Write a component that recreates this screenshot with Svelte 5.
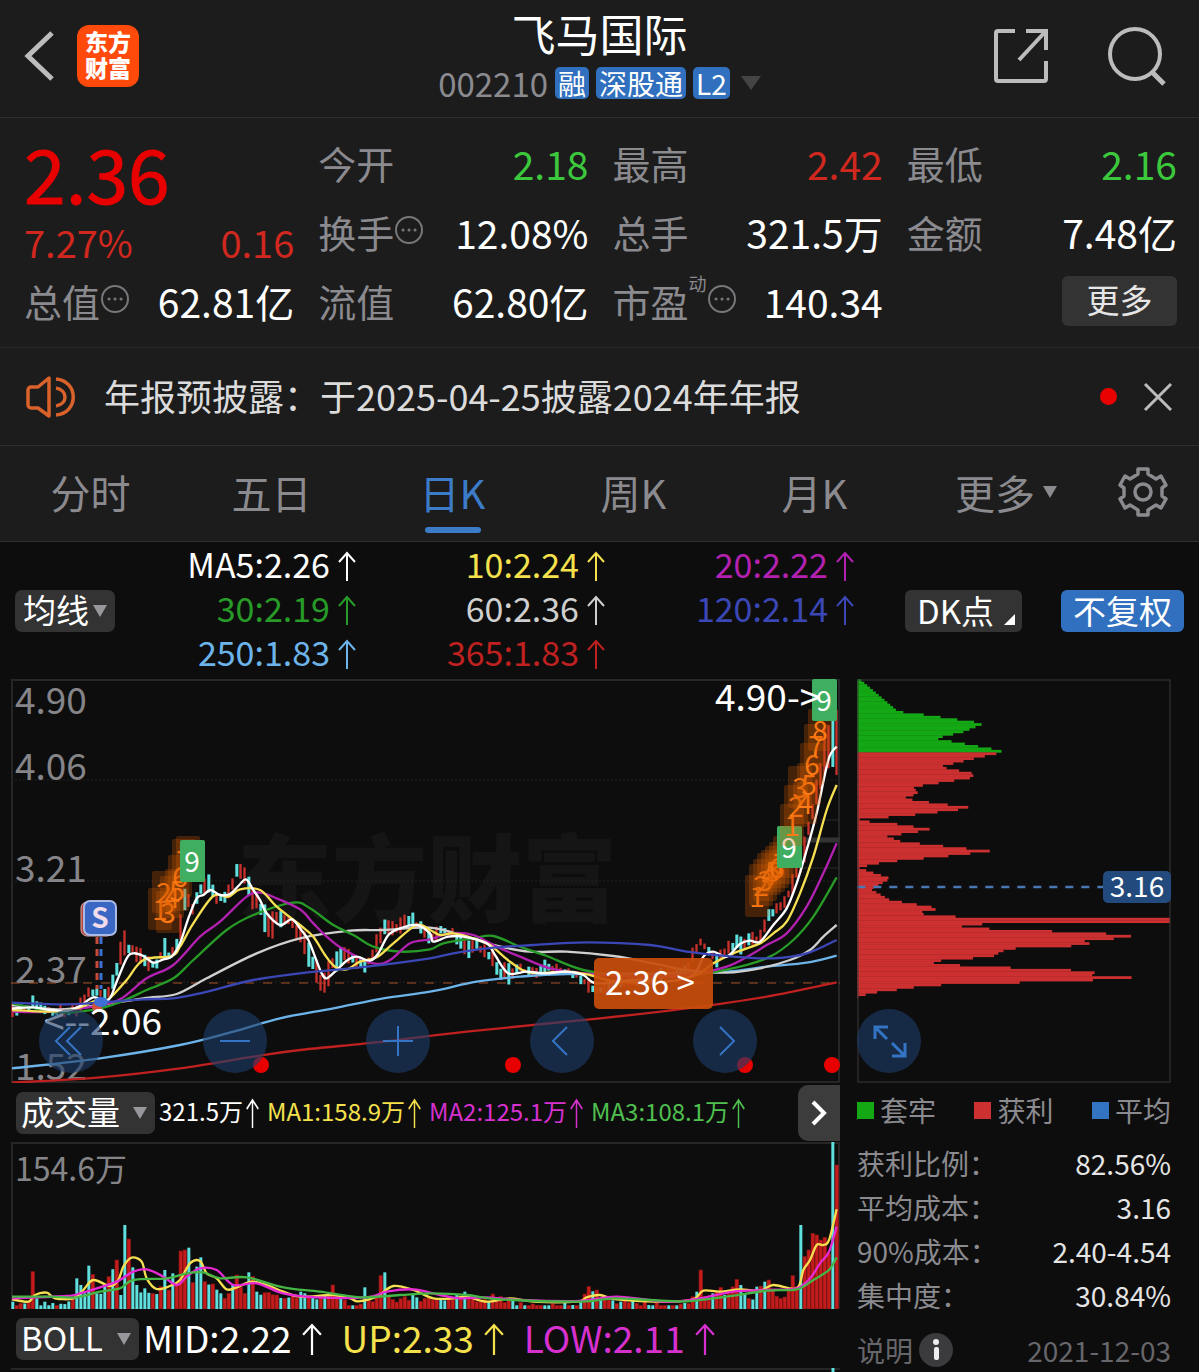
<script>
  const tags = ["融", "深股通", "L2"];
  const tabs = ["分时", "五日", "日K", "周K", "月K"];
  let activeTab = "日K";

  const quotes = [
    { label: "今开", value: "2.18", tone: "down" },
    { label: "最高", value: "2.42", tone: "up" },
    { label: "最低", value: "2.16", tone: "down" },
    { label: "换手", value: "12.08%", hint: true },
    { label: "总手", value: "321.5万" },
    { label: "金额", value: "7.48亿" },
    { label: "总值", value: "62.81亿", hint: true },
    { label: "流值", value: "62.80亿" },
    { label: "市盈", sup: "动", value: "140.34", hint: true },
  ];

  const averages = [
    { text: "MA5:2.26", color: "#ffffff" },
    { text: "10:2.24", color: "#f5e14c" },
    { text: "20:2.22", color: "#b321b0" },
    { text: "30:2.19", color: "#279a27" },
    { text: "60:2.36", color: "#cfcfcf" },
    { text: "120:2.14", color: "#3b47b5" },
    { text: "250:1.83", color: "#6cb4ea" },
    { text: "365:1.83", color: "#bf2020" },
  ];

  const volumes = [
    { text: "321.5万", color: "#ffffff" },
    { text: "MA1:158.9万", color: "#f5e14c" },
    { text: "MA2:125.1万", color: "#d631cf" },
    { text: "MA3:108.1万", color: "#4fc04f" },
  ];

  const bolls = [
    { text: "MID:2.22", color: "#ffffff" },
    { text: "UP:2.33", color: "#f5e14c" },
    { text: "LOW:2.11", color: "#d631cf" },
  ];

  const legend = [
    { text: "套牢", color: "#15a815" },
    { text: "获利", color: "#cc3030" },
    { text: "平均", color: "#3274c2" },
  ];

  const stats = [
    { label: "获利比例：", value: "82.56%" },
    { label: "平均成本：", value: "3.16" },
    { label: "90%成本：", value: "2.40-4.54" },
    { label: "集中度：", value: "30.84%" },
  ];

  const axis = [
    { text: "4.90", y: 35 },
    { text: "4.06", y: 101 },
    { text: "3.21", y: 203 },
    { text: "2.37", y: 304 },
    { text: "1.52", y: 401 },
  ];

  // Price chart series, three units to the pixel
  const priceLines = [
    { color: "#bf2020", d: [36,1238,300,1222,540,1195,760,1160,900,1140,1150,1115,1400,1085,1800,1045,2060,1015,2300,980,2510,937] },
    { color: "#6cb4ea", d: [36,1195,300,1165,540,1125,700,1085,840,1045,1000,1015,1150,985,1290,965,1430,935,1560,920,1700,912,2000,910,2180,905,2300,890,2420,878,2510,857] },
    { color: "#cfcfcf", d: [36,1005,180,1018,300,1005,430,985,530,972,620,925,770,850,900,805,1050,782,1150,780,1290,773,1400,800,1480,825,1590,845,1700,845,1840,858,1960,880,2060,900,2180,908,2280,895,2370,870,2430,840,2470,800,2510,765] },
    { color: "#279a27", d: [36,1000,130,1020,200,1028,300,1015,370,992,440,960,520,925,580,870,680,780,760,735,880,698,930,715,1000,765,1060,795,1120,830,1200,845,1290,838,1330,820,1420,805,1480,798,1560,830,1640,858,1750,900,1900,920,2080,915,2220,890,2310,860,2380,810,2440,740,2510,622] },
    { color: "#b321b0", d: [36,1025,150,1025,280,1010,360,988,440,925,520,885,600,800,660,755,740,680,780,668,830,685,900,718,940,760,980,800,1030,838,1120,880,1170,870,1230,820,1290,808,1350,790,1420,795,1490,830,1560,860,1650,895,1750,910,1900,920,2060,915,2180,890,2260,850,2300,825,2360,790,2420,710,2470,610,2510,520] },
    { color: "#f7df52", d: [36,1020,150,1025,230,1015,290,990,325,988,380,930,430,870,515,858,540,830,580,760,640,678,685,680,720,658,780,660,830,710,900,765,940,800,975,855,1005,890,1040,898,1080,875,1130,862,1180,820,1250,765,1290,780,1320,795,1360,790,1420,805,1470,825,1530,875,1590,908,1700,905,1770,915,1850,935,2000,935,2090,915,2140,880,2200,850,2280,820,2320,790,2360,755,2400,670,2440,560,2480,420,2510,345] },
    { color: "#ffffff", d: [36,1015,100,1012,150,1020,200,1022,240,1008,280,982,325,990,350,935,380,865,400,850,430,858,460,878,490,868,515,860,540,820,565,745,590,685,610,675,632,660,660,675,690,672,715,648,738,628,760,660,780,690,800,730,840,765,875,748,900,775,925,810,945,860,965,910,980,925,1005,905,1040,872,1070,860,1110,872,1135,850,1165,795,1200,775,1250,765,1290,790,1300,815,1345,800,1390,800,1460,820,1485,855,1525,910,1580,905,1635,910,1700,905,1750,915,1790,940,1900,930,2000,935,2080,915,2110,860,2140,845,2180,860,2220,822,2250,812,2280,815,2320,765,2360,715,2390,640,2420,540,2450,430,2485,270,2510,230] },
    { color: "#3b47b5", d: [36,998,200,1003,330,995,430,988,520,985,600,970,760,930,900,910,1100,890,1290,865,1360,850,1480,833,1600,825,1760,817,1950,825,2060,845,2200,860,2320,865,2420,850,2510,810] },
  ];

  // x, high, low
  const range = [
    [40,1005,1040],[86,1005,1030],[98,970,1020],[112,990,1020],[130,1005,1040],[200,1005,1045],[235,985,1035],[270,945,990],[325,955,990],[350,870,930],[373,780,875],[386,820,860],[400,795,870],[430,845,905],[460,870,905],[480,830,890],[493,790,870],[510,850,880],[535,760,850],[555,650,740],[565,655,715],[580,690,745],[600,640,670],[627,615,680],[650,670,705],[680,655,700],[710,573,640],[735,590,640],[760,660,730],[780,680,735],[808,740,830],[830,715,770],[870,740,770],[905,770,845],[940,850,925],[963,900,970],[975,910,995],[1000,840,910],[1035,830,870],[1060,850,890],[1095,860,920],[1120,820,870],[1155,730,790],[1200,745,800],[1237,725,770],[1265,760,800],[1290,780,830],[1320,760,800],[1360,775,800],[1393,800,875],[1430,805,850],[1475,830,885],[1495,870,930],[1525,885,940],[1560,880,910],[1590,890,930],[1635,872,910],[1680,885,910],[1720,900,925],[1750,910,945],[1768,930,985],[1790,940,980],[1900,915,950],[2060,880,920],[2100,785,840],[2120,820,850],[2150,850,900],[2170,825,860],[2215,780,850],[2245,795,840],[2275,780,830],[2305,720,770],[2330,700,730],[2355,680,720],[2375,600,690],[2410,520,600],[2440,380,450],[2460,280,380],[2475,150,310],[2498,40,290],[2510,110,390],
  ];

  const volumeTops = [
    [40,665],[60,670],[86,665],[98,575],[112,655],[135,665],[200,660],[218,650],[230,595],[243,615],[255,640],[267,557],[280,583],[295,640],[325,590],[350,540],[362,645],[375,435],[388,477],[400,562],[412,615],[430,625],[455,640],[480,620],[495,570],[507,630],[518,580],[530,610],[542,513],[555,510],[567,503],[578,608],[590,560],[602,532],[615,605],[640,612],[660,640],[685,640],[710,585],[735,640],[747,577],[760,590],[775,635],[800,635],[830,645],[850,655],[905,635],[960,655],[1000,615],[1030,660],[1080,672],[1095,622],[1110,660],[1130,650],[1140,587],[1157,577],[1170,650],[1215,650],[1240,645],[1270,655],[1395,635],[1430,665],[1480,642],[1500,650],[1540,660],[1600,672],[1690,668],[1740,665],[1755,642],[1768,620],[1790,630],[1815,655],[1870,655],[1930,665],[2040,672],[2090,635],[2103,570],[2115,650],[2150,635],[2162,622],[2185,640],[2210,598],[2225,615],[2250,655],[2270,620],[2295,605],[2307,600],[2340,655],[2366,630],[2378,587],[2390,620],[2403,435],[2415,530],[2426,510],[2438,460],[2450,465],[2465,480],[2475,472],[2487,520],[2498,186],[2510,255],
  ];

  const volumeLines = [
    { color: "#f7df52", d: [36,658,85,665,105,645,140,638,165,655,220,655,250,630,280,600,330,618,355,600,370,560,395,533,425,545,440,595,470,627,510,618,540,600,570,550,600,543,620,580,650,595,680,628,710,622,755,605,800,615,850,635,900,650,1000,645,1050,655,1075,664,1130,650,1180,618,1240,630,1300,655,1360,655,1400,650,1460,665,1530,655,1600,665,1730,665,1760,652,1800,645,1850,658,2000,665,2080,658,2110,632,2160,635,2220,628,2280,632,2320,615,2390,625,2410,570,2430,540,2450,495,2470,495,2487,480,2510,388] },
    { color: "#e82ad6", d: [36,655,200,648,240,640,300,622,350,605,400,575,440,568,490,590,530,615,560,590,600,565,650,570,700,615,770,610,850,640,950,652,1100,652,1160,635,1240,628,1320,645,1380,655,1460,652,1560,660,1740,663,1850,650,2000,665,2100,655,2200,635,2300,630,2390,625,2430,595,2460,550,2487,515,2510,440] },
    { color: "#45b545", d: [36,650,150,650,230,652,300,635,360,625,400,600,500,595,560,580,610,577,660,595,740,592,850,622,960,635,1080,652,1200,645,1300,640,1400,645,1500,658,1740,665,1840,655,1950,660,2060,664,2180,650,2300,632,2390,628,2440,600,2487,570,2510,532] },
  ];

  // y, right edge of the cost distribution
  const chips = [
    [28,60],[125,175],[130,225],[160,432],[185,370],[205,285],[242,487],[250,472],[262,415],[290,297],[310,400],[322,400],[350,220],[370,235],[385,188],[400,290],[413,400],[425,300],[437,190],[447,60],[452,54],[462,170],[478,276],[498,140],[515,185],[543,453],[560,300],[575,137],[592,54],[605,90],[625,152],[657,92],[690,150],[715,302],[730,220],[743,390],[747,990],[755,990],[757,465],[772,340],[785,675],[795,888],[803,850],[816,695],[824,802],[832,540],[845,475],[855,475],[866,380],[875,245],[888,385],[900,690],[911,797],[917,735],[924,923],[936,565],[947,210],[954,228],[962,130],[978,55],
  ];

  const marks = [
    [149,230,1],[153,213,2],[157,233,3],[161,218,4],[166,211,5],[169,197,6],[173,181,7],[177,178,8],[181,182,9],
    [746,217,1],[750,206,2],[754,201,3],[758,195,4],[762,192,5],[766,188,6],[770,184,7],[774,178,8],[778,168,9],
    [781,146,1],[785,127,2],[789,108,3],[794,124,4],[798,105,5],[801,85,6],[805,66,7],[809,51,8],[813,21,9],
  ];

  function rand(i) {
    const v = Math.sin(i * 12.9898) * 43758.5453;
    return v - Math.floor(v);
  }

  function at(table, x, col) {
    const i = table.findIndex((row) => row[0] >= x);
    if (i < 0) return table[table.length - 1][col];
    if (i === 0) return table[0][col];
    const a = table[i - 1];
    const b = table[i];
    return a[col] + ((b[col] - a[col]) * (x - a[0])) / (b[0] - a[0]);
  }

  function curve(d) {
    const p = [];
    for (let i = 0; i < d.length; i += 2) p.push([d[i], d[i + 1]]);
    let out = `M${p[0]}`;
    for (let i = 0; i < p.length - 1; i++) {
      const [a, b, c, e] = [p[i - 1] || p[i], p[i], p[i + 1], p[i + 2] || p[i + 1]];
      out += `C${b[0] + (c[0] - a[0]) / 6},${b[1] + (c[1] - a[1]) / 6} ${c[0] - (e[0] - b[0]) / 6},${c[1] - (e[1] - b[1]) / 6} ${c}`;
    }
    return out;
  }

  const candles = [];
  const bars = [];
  for (let i = 0; i < 207; i++) {
    const x = 38 + i * 12;
    const high = at(range, x, 1);
    const low = at(range, x, 2);
    const size = low - high;
    candles.push({
      x,
      high: high + size * (0.5 * rand(i) - 0.1),
      low: low - size * (0.45 * rand(i + 300) - 0.1),
      up: x > 2340 ? i !== 205 : rand(i + 77) > 0.48,
    });
    const near = volumeTops.find((v) => Math.abs(v[0] - x) < 6);
    bars.push({
      x,
      y: near ? near[1] : Math.min(676, at(volumeTops, x, 1) + rand(i + 9) * 18),
      up: near && [375, 400, 495, 567, 602, 747, 2403, 2498].includes(near[0]) ? false : x > 2340 || rand(i + 51) > 0.42,
    });
  }

  const chipRows = [];
  for (let y = 28; y < 978; y += 7.3) chipRows.push({ y, w: at(chips, y + 3.6, 1) - 52 });
</script>

{#snippet hint()}
  <svg class="hint" viewBox="0 0 30 30" aria-hidden="true">
    <circle cx="15" cy="15" r="13" />
    <path d="M9 15h.1M15 15h.1M21 15h.1" />
  </svg>
{/snippet}

{#snippet quote(q)}
  <div class="quote">
    <span class="quote-label">{q.label}{#if q.sup}<sup>{q.sup}</sup>{/if}{#if q.hint}{@render hint()}{/if}</span>
    <span class="quote-value {q.tone}">{q.value}</span>
  </div>
{/snippet}

{#snippet reading(item)}
  <span class="reading" style:color={item.color}>
    {item.text}
    <svg class="arrow" viewBox="0 0 18 30" preserveAspectRatio="none" aria-hidden="true"><path d="M9 30V2M1 11L9 2l8 9" /></svg>
  </span>
{/snippet}

{#snippet picker(name, options)}
  <span class="picker">
    <select aria-label={name}>
      {#each options as option}<option>{option}</option>{/each}
    </select>
    <svg viewBox="0 0 14 12" aria-hidden="true"><path d="M0 0h14L7 12z" /></svg>
  </span>
{/snippet}

<div class="page">
  <header>
    <div class="side">
      <button class="icon" aria-label="返回">
        <svg width="32" height="52" viewBox="0 0 32 52"><path d="M28 3L4 26l24 23" stroke-width="5" /></svg>
      </button>
      <a class="logo" href="#home"><span>东方</span><span>财富</span></a>
    </div>
    <div class="name">
      <h1>飞马国际</h1>
      <div class="code">
        <span>002210</span>
        {#each tags as tag}<b>{tag}</b>{/each}
        <svg width="20" height="14" viewBox="0 0 20 14"><path d="M0 0h20L10 14z" fill="#444" /></svg>
      </div>
    </div>
    <div class="side end">
      <button class="icon" aria-label="分享">
        <svg width="56" height="56" viewBox="0 0 56 56" stroke-width="4">
          <path d="M22 3H5a2 2 0 0 0-2 2v46a2 2 0 0 0 2 2h46a2 2 0 0 0 2-2V33M33 3h20v19M52 4L26 32" />
        </svg>
      </button>
      <button class="icon" aria-label="搜索">
        <svg width="60" height="60" viewBox="0 0 60 60" stroke-width="4">
          <circle cx="28" cy="28" r="25" />
          <path d="M45 46l12 12" stroke-width="5" />
        </svg>
      </button>
    </div>
  </header>

  <section class="quotes">
    <div class="price">
      <strong>2.36</strong>
      <div class="change"><span>7.27%</span><span>0.16</span></div>
    </div>
    {#each quotes as q}{@render quote(q)}{/each}
    <div class="quote last"><button class="more">更多</button></div>
  </section>

  <section class="notice">
    <svg width="50" height="42" viewBox="0 0 50 42" fill="none" stroke="#d9622b" stroke-width="3.5" stroke-linejoin="round">
      <path d="M23 2v38L12 32H5a3 3 0 0 1-3-3V14a3 3 0 0 1 3-3h7zM30 3c23 2 23 34 0 36M30 12c12 2 12 16 0 18" />
    </svg>
    <a href="#notice">年报预披露：于2025-04-25披露2024年年报</a>
    <i class="dot"></i>
    <button class="icon" aria-label="关闭">
      <svg width="30" height="30" viewBox="0 0 30 30" stroke-width="3"><path d="M2 2l26 26M28 2L2 28" /></svg>
    </button>
  </section>

  <nav>
    {#each tabs as tab}
      <button class:active={tab === activeTab} on:click={() => (activeTab = tab)}>{tab}</button>
    {/each}
    <button class="tab-more">更多<svg width="14" height="12" viewBox="0 0 14 12"><path d="M0 0h14L7 12z" fill="#8a8a8f" /></svg></button>
    <button aria-label="设置">
      <svg width="50" height="50" viewBox="0 0 50 50" fill="none" stroke="#8a8a8f" stroke-width="3.5" stroke-linejoin="round">
        <path d="M20 2h10v5l8 5 5-3 5 9-4 3v8l4 3-5 9-5-3-8 5v5H20v-5l-8-5-5 3-5-9 4-3v-8l-4-3 5-9 5 3 8-5z" />
        <circle cx="25" cy="25" r="8" />
      </svg>
    </button>
  </nav>

  <section class="averages">
    {@render picker("均线", ["均线"])}
    <div class="average-list">
      {#each averages as item}{@render reading(item)}{/each}
    </div>
    <div class="average-actions">
      <button class="chip-button">DK点<svg width="11" height="11" viewBox="0 0 11 11"><path d="M11 0v11H0z" fill="#fff" /></svg></button>
      <button class="chip-button blue">不复权</button>
    </div>
  </section>

  <main>
    <div class="left">
      <div class="chart">
        <svg class="plot" viewBox="0 0 829 404">
          <text class="watermark" x="226" y="236">东方财富</text>
          <rect class="frame" x="1" y="1" width="827" height="402" />
          <path class="grid" d="M0 101h829M0 202h829M0 303h829" />
          <path d="M809 141h20M790 189h39" stroke="#2a2a2a" />
          <path d="M792 161h37" stroke="#333" stroke-width="5" />
          {#each axis as tick}<text class="tick" x="4" y={tick.y}>{tick.text}</text>{/each}
          <path class="last-price" d="M0 304h829" />
          <svg x="0" y="0" width="829" height="404" viewBox="33 27 2487 1212">
            {#each candles as c}
              <rect x={c.x - 4} y={c.high} width={c.up ? 7 : 9} height={c.low - c.high} fill={c.up ? "#c8302c" : "#5fe0de"} />
            {/each}
            {#each priceLines as line}<path class="line" d={curve(line.d)} stroke={line.color} />{/each}
          </svg>
          {#each marks as [x, y, n]}
            {#if n === 9}
              <rect x={x - 12} y={y - 21} width="25" height="42" rx="2" fill="#3fae60" />
            {:else}
              <rect x={x - 12} y={y - 21} width="24" height="42" rx="2" fill="#d05a00" fill-opacity=".28" />
            {/if}
            <text class="mark" class:nine={n === 9} {x} y={y + 11}>{n}</text>
          {/each}
          <path d="M86 258v52" stroke="#c44a3c" stroke-width="3" stroke-dasharray="7 5" />
          <path d="M90 258v52" stroke="#3f6fd0" stroke-width="3" stroke-dasharray="7 5" />
          <circle cx="86" cy="328" r="5" fill="#d2513c" />
          <ellipse cx="90" cy="323" rx="7" ry="5" fill="#3d6fd6" />
          <rect x="70" y="223" width="32" height="34" rx="6" fill="#b8433c" stroke="#d9a9a5" />
          <rect x="73" y="222" width="32" height="34" rx="6" fill="#3a66c4" stroke="#a9bbe4" stroke-width="2" />
          <text class="signal" x="89" y="249">S</text>
          <text class="peak" x="704" y="32">4.90-&gt;</text>
          <text class="peak" x="151" y="356" text-anchor="end">&lt;--2.06</text>
          <rect x="583" y="279" width="119" height="51" rx="5" fill="#c84d0c" fill-opacity=".93" />
          <text class="tag" x="594" y="316">2.36 &gt;</text>
          {#each [250, 502, 734, 821] as x}<circle cx={x} cy="386" r="8" fill="#e80000" />{/each}
        </svg>
        <div class="controls">
          <button class="round" aria-label="最早"><svg viewBox="0 0 64 64"><path d="M31 18L17 32l14 14M42 18L28 32l14 14" /></svg></button>
          <button class="round" aria-label="缩小"><svg viewBox="0 0 64 64"><path d="M17 32h30" /></svg></button>
          <button class="round" aria-label="放大"><svg viewBox="0 0 64 64"><path d="M17 32h30M32 17v30" /></svg></button>
          <button class="round" aria-label="左移"><svg viewBox="0 0 64 64"><path d="M37 18L23 32l14 14" /></svg></button>
          <button class="round" aria-label="右移"><svg viewBox="0 0 64 64"><path d="M27 18l14 14-14 14" /></svg></button>
        </div>
      </div>

      <div class="indicator">
        {@render picker("副图一", ["成交量"])}
        <div class="volume-list">
          {#each volumes as item}{@render reading(item)}{/each}
        </div>
        <button class="next" aria-label="更多指标">
          <svg width="18" height="28" viewBox="0 0 18 28"><path d="M3 3l11 11L3 25" /></svg>
        </button>
      </div>

      <svg class="plot" viewBox="0 0 829 167">
        <rect class="frame" x="1" y="1" width="827" height="165" />
        <text class="volume-max" x="4" y="39">154.6万</text>
        <svg x="0" y="0" width="829" height="167" viewBox="33 186 2487 501">
          {#each bars as b}
            {#if b.up}
              <rect x={b.x - 5} y={b.y} width="11" height={687 - b.y} fill="#c41c1c" stroke="#7d1515" stroke-width="2" />
            {:else}
              <rect x={b.x - 4} y={b.y} width="9" height={687 - b.y} fill="#5fe0de" />
            {/if}
          {/each}
          {#each volumeLines as line}<path class="line" d={curve(line.d)} stroke={line.color} />{/each}
        </svg>
      </svg>

      <div class="indicator">
        {@render picker("副图二", ["BOLL"])}
        <div class="boll-list">
          {#each bolls as item}{@render reading(item)}{/each}
        </div>
      </div>
      <svg class="plot" viewBox="0 0 829 4">
        <path d="M0 1h829" stroke="#262626" stroke-width="2" />
        <path d="M822 0v4" stroke="#5fe0de" stroke-width="3" />
      </svg>
    </div>

    <aside>
      <div class="chart">
        <svg class="plot" viewBox="0 0 314 404">
          <svg x="0" y="0" width="314" height="404" viewBox="51 27 942 1212">
            {#each chipRows as row}
              <rect x="52" y={row.y} width={row.w} height="8.4" fill={row.y < 240 ? "#15a815" : "#cc3030"} />
            {/each}
            <path d="M52 651h740" stroke="#4a78b5" stroke-width="8" stroke-dasharray="24 24" />
          </svg>
          <rect x="1" y="1" width="312" height="402" fill="none" stroke="#3a3a3a" />
          <rect x="246" y="192" width="68" height="32" rx="5" fill="#234a7c" />
          <text class="cost" x="280" y="218">3.16</text>
        </svg>
        <button class="round expand" aria-label="全屏"><svg viewBox="0 0 64 64"><path d="M18 30V18h13M18 18l12 12M48 34v13H35M48 47L35 34" /></svg></button>
      </div>
      <ul class="legend">
        {#each legend as item}<li><i style:background={item.color}></i>{item.text}</li>{/each}
      </ul>
      <dl>
        {#each stats as s}
          <div><dt>{s.label}</dt><dd>{s.value}</dd></div>
        {/each}
      </dl>
      <footer>
        <span>说明</span>
        <button class="icon" aria-label="说明">
          <svg class="info" width="34" height="34" viewBox="0 0 34 34">
            <circle cx="17" cy="17" r="17" fill="#3b3b3d" />
            <circle cx="17" cy="9" r="3" fill="#eee" />
            <rect x="15" y="14" width="5" height="13" rx="2" fill="#eee" />
          </svg>
        </button>
        <time>2021-12-03</time>
      </footer>
    </aside>
  </main>
</div>

<style>
  :global(body) {
    margin: 0;
    background: #0d0d0d;
  }

  .page {
    font-family: "Noto Sans CJK SC", sans-serif;
    color: #fff;
    background: #0d0d0d;
  }

  button,
  select {
    margin: 0;
    padding: 0;
    border: 0;
    background: none;
    font: inherit;
    color: inherit;
  }

  svg {
    display: block;
    flex: none;
  }

  header {
    display: grid;
    grid-template-columns: 1fr auto 1fr;
    align-items: center;
    height: 117px;
    background: #1c1c1c;
    border-bottom: 1px solid #303030;
  }

  .side {
    display: flex;
    align-items: center;
    gap: 21px;
    padding: 0 0 6px 24px;
  }

  .end {
    justify-content: flex-end;
    gap: 58px;
    padding: 0 32px 6px 0;
  }

  .icon svg {
    fill: none;
    stroke: #bcbcbc;
  }

  .icon .info {
    stroke: none;
  }

  .logo {
    display: flex;
    flex-direction: column;
    justify-content: center;
    align-items: center;
    width: 62px;
    height: 58px;
    padding-bottom: 4px;
    border-radius: 12px;
    background: #ff4a0c;
    color: #fff;
    font-size: 23px;
    font-weight: 900;
    line-height: 26px;
    text-decoration: none;
  }

  h1 {
    margin: 0;
    font-size: 44px;
    font-weight: 400;
    line-height: 54px;
    text-align: center;
  }

  .code {
    display: flex;
    align-items: center;
    gap: 7px;
    height: 46px;
    padding-bottom: 6px;
    color: #8a8a8f;
    font-size: 33px;
    line-height: 42px;
  }

  .code b {
    padding: 0 3px;
    border-radius: 5px;
    background: #3070be;
    color: #fff;
    font-size: 28px;
    font-weight: 400;
    line-height: 32px;
  }

  .code svg {
    margin-left: 4px;
  }

  .quotes {
    display: grid;
    grid-template-columns: repeat(4, 1fr);
    grid-auto-rows: 69px;
    column-gap: 24px;
    padding: 10px 22px 12px 24px;
    background: #1c1c1c;
    border-bottom: 1px solid #2a2a2a;
    font-size: 38px;
  }

  .price {
    grid-row: span 2;
    color: #d0281f;
    line-height: 52px;
  }

  .price strong {
    display: block;
    color: #e80000;
    font-size: 75px;
    font-weight: 400;
    line-height: 88px;
    -webkit-text-stroke: 1px #e80000;
  }

  .change,
  .quote {
    display: flex;
    justify-content: space-between;
    align-items: center;
  }

  .quote-label {
    display: flex;
    align-items: center;
    color: #8a8a8f;
  }

  .quote-label sup {
    align-self: flex-start;
    font-size: 18px;
    line-height: 20px;
  }

  .quote-value {
    font-size: 39px;
  }

  .up {
    color: #d0281f;
  }

  .down {
    color: #3cc83c;
  }

  .last {
    justify-content: flex-end;
  }

  .more {
    width: 115px;
    height: 50px;
    padding-bottom: 4px;
    border-radius: 6px;
    background: #333;
    color: #e6e6e6;
    font-size: 33px;
    line-height: 44px;
  }

  .hint {
    width: 30px;
    height: 30px;
    margin-bottom: 4px;
    fill: none;
    stroke: #77777b;
    stroke-width: 2;
  }

  .hint path {
    stroke-width: 3;
    stroke-linecap: round;
  }

  .notice {
    display: flex;
    align-items: center;
    height: 97px;
    padding: 0 26px;
    background: #1c1c1c;
    border-bottom: 1px solid #303030;
  }

  .notice a {
    flex: 1;
    padding: 0 0 4px 28px;
    color: #dcdcdc;
    font-size: 36px;
    text-decoration: none;
  }

  .dot {
    width: 17px;
    height: 17px;
    margin-right: 26px;
    border-radius: 50%;
    background: #e80000;
  }

  nav {
    display: grid;
    grid-template-columns: repeat(5, 181fr) 182fr 112fr;
    height: 95px;
    background: #1c1c1c;
    border-bottom: 1px solid #303030;
    color: #8a8a8f;
    font-size: 40px;
  }

  nav button {
    position: relative;
    display: flex;
    justify-content: center;
    align-items: center;
    padding-bottom: 4px;
  }

  .active {
    color: #3b7bc8;
  }

  .active::after {
    content: "";
    position: absolute;
    bottom: 8px;
    left: calc(50% - 28px);
    width: 56px;
    height: 6px;
    border-radius: 3px;
    background: #3b7bc8;
  }

  .tab-more {
    gap: 8px;
    padding-left: 20px;
  }

  .averages {
    display: flex;
    align-items: center;
    height: 137px;
    padding: 0 15px;
  }

  .picker {
    display: grid;
    align-items: center;
    border-radius: 7px;
    background: #333;
  }

  .picker select {
    grid-area: 1 / 1;
    height: 42px;
    padding: 0 26px 4px 8px;
    appearance: none;
    font-size: 33px;
    line-height: 38px;
  }

  .picker svg {
    grid-area: 1 / 1;
    justify-self: end;
    width: 14px;
    height: 12px;
    margin-right: 8px;
    fill: #97979c;
    pointer-events: none;
  }

  .average-list {
    display: grid;
    grid-template-columns: repeat(3, 249px);
    grid-auto-rows: 44px;
    justify-items: end;
    padding-bottom: 5px;
    margin-left: -8px;
    font-size: 34px;
    line-height: 44px;
  }

  .reading {
    display: flex;
    align-items: center;
    gap: 8px;
    white-space: nowrap;
  }

  .arrow {
    width: 18px;
    height: 30px;
    margin-top: 4px;
    fill: none;
    stroke: currentColor;
    stroke-width: 2;
  }

  .average-actions {
    display: flex;
    flex: 1;
    justify-content: flex-end;
    gap: 39px;
  }

  .chip-button {
    display: flex;
    align-items: center;
    gap: 10px;
    height: 42px;
    padding: 0 7px 2px 12px;
    border-radius: 6px;
    background: #333;
    font-size: 33px;
    line-height: 38px;
  }

  .chip-button svg {
    align-self: flex-end;
    margin-bottom: 5px;
  }

  .blue {
    padding: 0 12px 2px;
    background: #3070be;
  }

  main {
    display: grid;
    grid-template-columns: minmax(0, 829fr) minmax(0, 314fr);
    gap: 17px;
    padding: 0 28px 0 11px;
  }

  .chart {
    position: relative;
  }

  .plot {
    width: 100%;
    overflow: visible;
  }

  .frame {
    fill: none;
    stroke: #262626;
    stroke-width: 2;
  }

  .grid {
    stroke: #222;
    stroke-dasharray: 2 2;
  }

  .last-price {
    stroke: #a5532a;
    stroke-width: 1;
    stroke-dasharray: 9 9;
  }

  .line {
    fill: none;
    stroke-width: 7;
    stroke-linejoin: round;
  }

  .watermark {
    fill: #151515;
    font-size: 95px;
    font-weight: 900;
  }

  .tick {
    fill: #858589;
    font-size: 37px;
  }

  .peak {
    fill: #fff;
    font-size: 37px;
  }

  .tag {
    fill: #fff;
    font-size: 33px;
  }

  .volume-max {
    fill: #858589;
    font-size: 32px;
  }

  .mark {
    fill: #ff7a14;
    font-size: 28px;
    text-anchor: middle;
  }

  .nine {
    fill: #fff;
  }

  .signal {
    fill: #f0dcea;
    font-size: 28px;
    font-weight: 700;
    text-anchor: middle;
  }

  .cost {
    fill: #fff;
    font-size: 28px;
    text-anchor: middle;
  }

  .controls {
    position: absolute;
    right: 10%;
    bottom: 10px;
    left: 28px;
    display: flex;
    justify-content: space-between;
  }

  .round {
    width: 64px;
    height: 64px;
    border-radius: 50%;
    background: rgba(30, 62, 105, 0.62);
  }

  .round svg {
    fill: none;
    stroke: #3474c4;
    stroke-width: 2;
  }

  .expand {
    position: absolute;
    bottom: 10px;
    left: 0;
  }

  .expand svg {
    stroke-width: 3;
  }

  .indicator {
    display: flex;
    align-items: center;
    gap: 4px;
    height: 59px;
    padding-left: 5px;
  }

  .indicator .picker select {
    padding: 0 35px 4px 5px;
  }

  .volume-list,
  .boll-list {
    display: flex;
    flex: 1;
    gap: 8px;
    padding-bottom: 4px;
    font-size: 24px;
    line-height: 40px;
  }

  .volume-list .reading {
    gap: 3px;
  }

  .volume-list .arrow {
    width: 13px;
  }

  .boll-list {
    gap: 20px;
    font-size: 37px;
  }

  .boll-list .reading {
    gap: 10px;
  }

  .boll-list .arrow {
    width: 20px;
    height: 32px;
  }

  .next {
    display: flex;
    justify-content: center;
    align-items: center;
    width: 42px;
    height: 56px;
    border-radius: 10px 0 0 10px;
    background: #3c3c3c;
  }

  .next svg {
    fill: none;
    stroke: #fff;
    stroke-width: 4;
  }

  .legend {
    display: flex;
    justify-content: space-between;
    align-items: center;
    height: 54px;
    margin: 0 0 4px;
    padding: 0;
    list-style: none;
    color: #8a8a8f;
    font-size: 28px;
    line-height: 44px;
  }

  .legend li {
    display: flex;
    align-items: center;
    gap: 6px;
  }

  .legend i {
    width: 17px;
    height: 17px;
  }

  dl {
    margin: 0;
    font-size: 28px;
    line-height: 44px;
  }

  dl div {
    display: flex;
    justify-content: space-between;
  }

  dt {
    color: #8a8a8f;
  }

  dd {
    margin: 0;
    color: #e4e4e4;
  }

  footer {
    display: flex;
    align-items: center;
    gap: 6px;
    height: 42px;
    margin-top: 12px;
    color: #66666a;
    font-size: 28px;
    line-height: 42px;
  }

  time {
    margin-left: auto;
  }
</style>
